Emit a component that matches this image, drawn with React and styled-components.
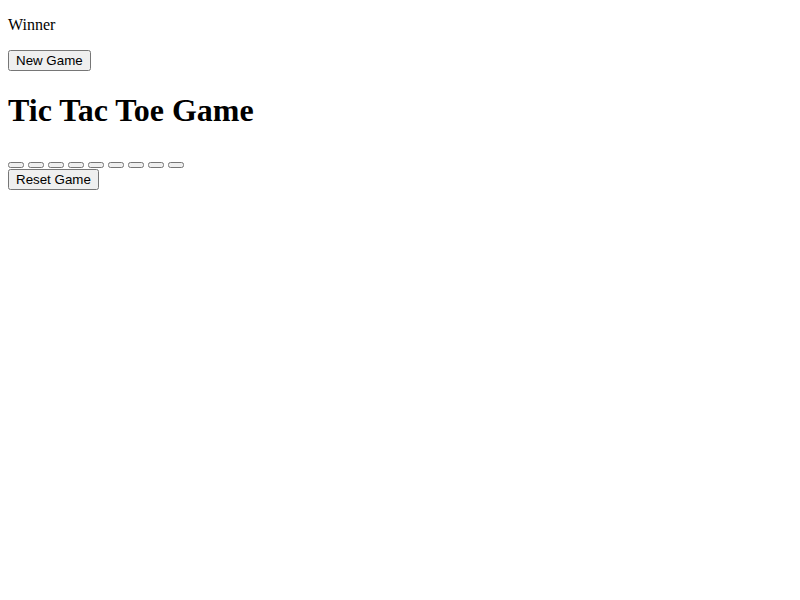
import { useState } from 'react'
import styled, { createGlobalStyle } from 'styled-components'

const Global = createGlobalStyle`
  body { margin: 0; padding: 8px; font-family: 'Liberation Serif', 'Times New Roman', serif; font-size: 16px; color: #000; background: #fff; }
`

const Status = styled.p` margin: 8px 0 16px; `
const Btn = styled.button`
  font-family: 'Liberation Sans', Arial, sans-serif; font-size: 13.333px;
`
const Title = styled.h1` font-size: 2em; margin: 0.67em 0; font-weight: bold; `
const Board = styled.div``
const Cell = styled.button`
  font-family: 'Liberation Sans', Arial, sans-serif; font-size: 13.333px;
`

export default function App() {
  const [cells, setCells] = useState(Array(9).fill(''))
  const reset = () => setCells(Array(9).fill(''))
  return (
    <>
      <Global />
      <Status>Winner</Status>
      <Btn onClick={reset}>New Game</Btn>
      <Title>Tic Tac Toe Game</Title>
      <Board>
        {cells.map((c, i) => (
          <span key={i}>
            <Cell onClick={() => setCells(cells.map((v, j) => (j === i && !v ? 'X' : v)))}>{c}</Cell>
            {i < 8 ? ' ' : ''}
          </span>
        ))}
      </Board>
      <Btn onClick={reset}>Reset Game</Btn>
    </>
  )
}
